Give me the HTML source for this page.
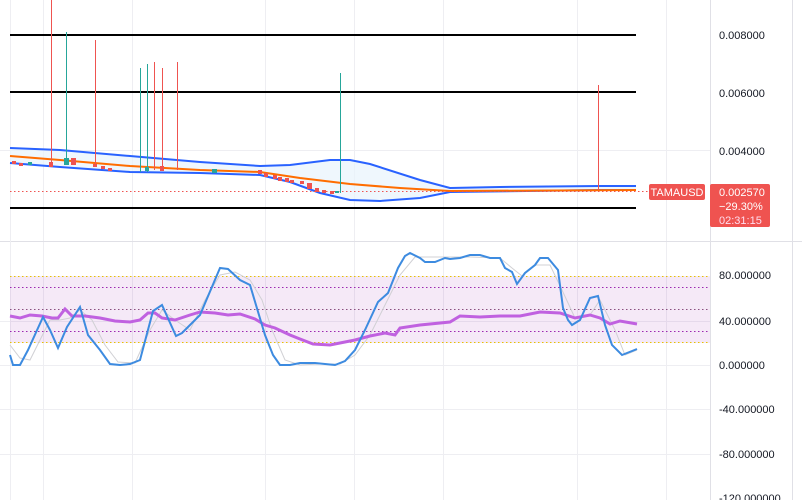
<!DOCTYPE html>
<html><head><meta charset="utf-8"><style>
body{margin:0;background:#fff;width:802px;height:500px;overflow:hidden;font-family:"Liberation Sans",sans-serif}
svg{display:block}
</style></head><body>
<svg width="802" height="500" viewBox="0 0 802 500" xmlns="http://www.w3.org/2000/svg">
<g stroke="#eeeef2" stroke-width="1">
<line x1="43.5" y1="0" x2="43.5" y2="500"/><line x1="132.5" y1="0" x2="132.5" y2="500"/>
<line x1="265.5" y1="0" x2="265.5" y2="500"/><line x1="354.5" y1="0" x2="354.5" y2="500"/>
<line x1="443.5" y1="0" x2="443.5" y2="500"/><line x1="577.5" y1="0" x2="577.5" y2="500"/>
<line x1="666.5" y1="0" x2="666.5" y2="500"/>
<line x1="0" y1="150.5" x2="710" y2="150.5"/>
<line x1="0" y1="321.5" x2="710" y2="321.5"/><line x1="0" y1="365.5" x2="710" y2="365.5"/>
<line x1="0" y1="409.5" x2="710" y2="409.5"/><line x1="0" y1="454.5" x2="710" y2="454.5"/>
</g>
<line x1="0" y1="241.5" x2="802" y2="241.5" stroke="#e0e0e6"/>
<line x1="710.5" y1="0" x2="710.5" y2="500" stroke="#e0e0e6"/>
<line x1="792.5" y1="0" x2="792.5" y2="500" stroke="#e0e0e6"/>
<line x1="10.5" y1="0" x2="10.5" y2="500" stroke="#eeeef2"/>
<g stroke="#000" stroke-width="2"><line x1="10" y1="35" x2="636" y2="35"/><line x1="10" y1="92" x2="636" y2="92"/><line x1="10" y1="208" x2="636" y2="208"/></g>
<polygon fill="#e8f3fc" opacity="0.7" points="10,148 60,150 130,156 200,162 260,166 290,165 330,160 350,160 370,164 420,180 450,188 500,187 600,186 636,186 636,190 600,190 450,192 420,198 380,201 350,200 320,193 290,182 260,175 200,173 130,172 60,167 10,163"/>
<polyline fill="none" stroke="#2962ff" stroke-width="2" points="10,148 60,150 130,156 200,162 260,166 290,165 330,160 350,160 370,164 420,180 450,188 500,187 600,186 636,186"/>
<polyline fill="none" stroke="#2962ff" stroke-width="2" points="10,163 60,167 130,172 200,173 260,175 290,182 320,193 350,200 380,201 420,198 450,192 600,190 636,190"/>
<polyline fill="none" stroke="#ff6d00" stroke-width="2" points="10,156 60,160 130,166 200,170 260,172 300,178 350,184 400,188 450,191 636,190"/>
<line x1="10" y1="191.5" x2="650" y2="191.5" stroke="#ef5350" stroke-dasharray="1.5 2.5"/>
<g stroke-width="1">
<line x1="51.5" y1="0" x2="51.5" y2="165" stroke="#ef5350"/><line x1="66.5" y1="32" x2="66.5" y2="165" stroke="#26a69a"/>
<line x1="95.5" y1="40" x2="95.5" y2="166" stroke="#ef5350"/><line x1="140.5" y1="68" x2="140.5" y2="172" stroke="#26a69a"/>
<line x1="147.5" y1="64" x2="147.5" y2="172" stroke="#26a69a"/><line x1="154.5" y1="62" x2="154.5" y2="170" stroke="#ef5350"/>
<line x1="162.5" y1="68" x2="162.5" y2="170" stroke="#ef5350"/><line x1="177.5" y1="62" x2="177.5" y2="170" stroke="#ef5350"/>
<line x1="340.5" y1="73" x2="340.5" y2="193" stroke="#26a69a"/><line x1="598.5" y1="85" x2="598.5" y2="190" stroke="#ef5350"/>
</g>
<g fill="#ef5350">
<rect x="12" y="161" width="4" height="3"/><rect x="19" y="163" width="4" height="3"/><rect x="49" y="162" width="4" height="5"/>
<rect x="71" y="158" width="5" height="7"/><rect x="93" y="164" width="4" height="3"/><rect x="101" y="166" width="4" height="3"/>
<rect x="108" y="168" width="4" height="3"/><rect x="160" y="166" width="4" height="5"/><rect x="258" y="170" width="4" height="4"/>
<rect x="264" y="173" width="4" height="4"/><rect x="273" y="175" width="4" height="4"/><rect x="278" y="177" width="4" height="4"/>
<rect x="285" y="178" width="4" height="4"/><rect x="290" y="180" width="4" height="3"/><rect x="300" y="181" width="4" height="3"/>
<rect x="307" y="183" width="5" height="6"/><rect x="315" y="188" width="4" height="4"/><rect x="322" y="190" width="4" height="3"/>
<rect x="330" y="191" width="4" height="3"/>
</g>
<g fill="#26a69a">
<rect x="28" y="162" width="4" height="3"/><rect x="64" y="158" width="5" height="7"/><rect x="145" y="167" width="4" height="4"/>
<rect x="212" y="169" width="5" height="4"/><rect x="335" y="191" width="4" height="2"/>
</g>
<rect x="649" y="184" width="56" height="16" rx="2" fill="#ef5350"/>
<text x="677" y="196" font-size="11" fill="#fff" text-anchor="middle">TAMAUSD</text>
<rect x="710" y="184" width="60" height="43" rx="2" fill="#ef5350"/>
<text x="719" y="196" font-size="11" fill="#fff">0.002570</text>
<text x="719" y="210" font-size="11" fill="#fff">−29.30%</text>
<text x="719" y="224" font-size="11" fill="#fde">02:31:15</text>
<g font-size="11" fill="#131722">
<text x="719" y="39">0.008000</text><text x="719" y="97">0.006000</text><text x="719" y="155">0.004000</text>
<text x="719" y="279">80.000000</text><text x="719" y="325">40.000000</text><text x="719" y="369">0.000000</text>
<text x="719" y="413">-40.000000</text><text x="719" y="458">-80.000000</text><text x="719" y="502">-120.000000</text>
</g>
<rect x="10" y="276" width="700" height="67" fill="#9c27b0" opacity="0.1"/>
<g stroke-width="1" stroke-dasharray="1.5 2.5">
<line x1="10" y1="276.5" x2="710" y2="276.5" stroke="#e6c200"/><line x1="10" y1="342.5" x2="710" y2="342.5" stroke="#e6c200"/>
<line x1="10" y1="287.5" x2="710" y2="287.5" stroke="#9c27b0"/><line x1="10" y1="331.5" x2="710" y2="331.5" stroke="#9c27b0"/>
<line x1="10" y1="309.5" x2="710" y2="309.5" stroke="#8a5080"/>
</g>
<polyline fill="none" stroke="#d0d0d4" stroke-width="1" points="10,345 20,358 30,360 40,340 50,320 60,320 70,318 80,310 92,320 105,345 118,362 135,363 150,330 162,310 175,320 190,330 205,300 220,275 235,272 250,280 262,300 272,330 285,360 300,365 320,364 340,364 355,355 370,335 385,305 400,275 415,257 440,257 470,257 500,258 512,268 522,276 535,265 550,265 562,290 575,318 590,315 600,300 615,330 625,355 637,350"/>
<polyline fill="none" stroke="#c061e0" stroke-width="3" points="10,316 20,318 30,315 42,316 52,318 58,318 65,309 72,316 85,316 100,318 115,321 130,322 140,320 148,313 155,313 162,318 175,320 190,315 200,312 215,313 228,315 240,314 255,319 265,325 275,328 290,335 300,339 313,344 330,345 345,342 355,340 370,336 385,333 395,335 400,328 420,325 450,322 460,316 480,317 500,316 520,316 540,312 560,313 575,318 590,315 600,318 610,324 620,321 637,324"/>
<polyline fill="none" stroke="#3d8be0" stroke-width="2" points="10,355 13,365 20,365 28,350 43,317 50,330 58,348 67,327 80,307 88,335 100,350 110,364 120,365 130,364 140,360 153,311 162,305 176,336 182,333 200,315 220,268 228,269 240,280 250,285 265,335 273,355 280,365 290,365 300,363 315,363 335,365 345,361 355,350 365,330 378,302 388,293 398,268 405,256 410,253 420,258 425,262 435,262 445,258 450,259 460,258 470,255 480,255 490,258 500,258 505,268 512,272 517,284 525,273 535,265 540,258 548,258 558,270 563,308 568,320 572,325 580,320 590,298 598,296 605,325 612,345 622,355 637,349"/>
</svg>
</body></html>
